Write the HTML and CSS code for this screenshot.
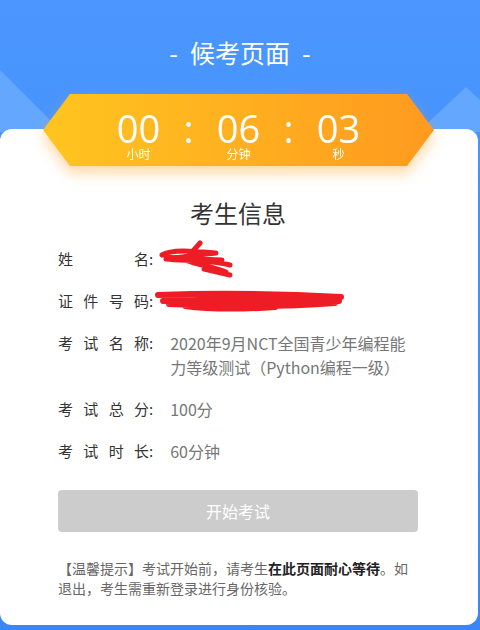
FILE: index.html
```html
<!DOCTYPE html>
<html lang="zh-CN">
<head>
    <meta charset="UTF-8">
    <meta name="viewport" content="width=device-width, initial-scale=1.0">
    <title>候考页面</title>
    <link rel="stylesheet" href="styles.css">
</head>
<body>
    <div class="page">
        <svg class="hills" width="480" height="140" viewBox="0 0 480 140">
            <polygon points="0,70 62,132 0,132" fill="#64a7ff"/>
            <polygon points="418,132 466,87 480,100 480,132" fill="#64a7ff"/>
        </svg>
        <header class="top">
            <h1 class="top-title"><span class="dash">-</span>候考页面<span class="dash">-</span></h1>
        </header>
        <main class="card">
            <div class="timer-wrap">
                <div class="timer">
                    <div class="unit"><span class="num">00</span><span class="lbl">小时</span></div>
                    <span class="colon">:</span>
                    <div class="unit"><span class="num">06</span><span class="lbl">分钟</span></div>
                    <span class="colon">:</span>
                    <div class="unit"><span class="num">03</span><span class="lbl">秒</span></div>
                </div>
            </div>
            <h2 class="card-title">考生信息</h2>
            <ul class="info">
                <li class="row">
                    <span class="label">姓名</span><span class="mark">:</span>
                    <span class="value">
                        <svg class="scribble" width="80" height="40" viewBox="0 0 80 40">
                            <path d="M4,16 C14,10 34,12 58,14 C40,16 20,18 8,20 C26,22 50,20 72,26 M8,18 C30,20 44,20 64,21 M28,20 L42,4 M30,22 C40,26 56,28 68,33 M46,30 L72,36" fill="none" stroke="#ee1c25" stroke-width="5" stroke-linecap="round" stroke-linejoin="round"/>
                        </svg>
                    </span>
                </li>
                <li class="row">
                    <span class="label">证件号码</span><span class="mark">:</span>
                    <span class="value">
                        <svg class="scribble" width="190" height="24" viewBox="0 0 190 24">
                            <path d="M3,6 C60,4 130,5 186,8 C130,10 60,10 8,12 C60,14 130,14 184,12 M14,15 C80,18 140,17 180,14 M30,17 C60,21 90,20 120,18" fill="none" stroke="#ee1c25" stroke-width="6" stroke-linecap="round" stroke-linejoin="round"/>
                        </svg>
                    </span>
                </li>
                <li class="row">
                    <span class="label">考试名称</span><span class="mark">:</span>
                    <span class="value">2020年9月NCT全国青少年编程能力等级测试（Python编程一级）</span>
                </li>
                <li class="row">
                    <span class="label">考试总分</span><span class="mark">:</span>
                    <span class="value">100分</span>
                </li>
                <li class="row">
                    <span class="label">考试时长</span><span class="mark">:</span>
                    <span class="value">60分钟</span>
                </li>
            </ul>
            <button class="start-btn" disabled>开始考试</button>
            <p class="tip">【温馨提示】考试开始前，请考生<b>在此页面耐心等待</b>。如退出，考生需重新登录进行身份核验。</p>
        </main>
    </div>
</body>
</html>
```

FILE: styles.css
```css
*{
  box-sizing:border-box;
}
body{
  margin:0;
  font-family:"Noto Sans CJK SC", sans-serif;
  background:linear-gradient(#4b97ff, #3b86f7);
}
.page{
  position:relative;
  width:480px;
  height:630px;
  overflow:hidden;
}
.hills{
  position:absolute;
  top:0;
  left:0;
}
.top{
  position:relative;
  height:129px;
}
.top-title{
  margin:0;
  padding-top:36px;
  text-align:center;
  color:white;
  font-size:25px;
  font-weight:normal;
  line-height:32px;
}
.dash{
  margin:0 12px;
}
.card{
  position:relative;
  height:496px;
  margin-right:2px;
  padding:0 60px 0 58px;
  background-color:white;
  border-radius:12px;
}
.timer-wrap{
  width:391px;
  margin-left:-15px;
  position:relative;
  top:-35px;
  margin-bottom:-35px;
  filter:drop-shadow(0 7px 7px rgba(255,168,50,0.45));
}
.timer{
  height:72px;
  padding-top:13px;
  display:grid;
  grid-template-columns:60px 40px 60px 40px 60px;
  justify-content:center;
  color:white;
  background:linear-gradient(to right, #ffc51f, #ff9a1f);
  clip-path:polygon(27px 0, calc(100% - 27px) 0, 100% 50%, calc(100% - 27px) 100%, 27px 100%, 0 50%);
}
.unit{
  display:flex;
  flex-direction:column;
  align-items:center;
}
.num{
  font-family:"Open Sans", sans-serif;
  font-size:38px;
  line-height:42px;
}
.lbl{
  font-size:12px;
  line-height:14px;
  margin-top:-2px;
}
.colon{
  text-align:center;
  font-family:"Open Sans", sans-serif;
  font-size:38px;
  line-height:42px;
}
.card-title{
  margin:30px 0 0;
  text-align:center;
  font-size:24px;
  font-weight:normal;
  line-height:34px;
  color:#333;
}
.info{
  list-style:none;
  margin:17px 0 0;
  padding:0;
  display:flex;
  flex-direction:column;
  gap:18px;
}
.row{
  display:flex;
  align-items:flex-start;
  line-height:24px;
}
.label{
  width:91px;
  font-size:15px;
  color:#333;
  text-align:justify;
  text-align-last:justify;
}
.mark{
  font-size:15px;
  color:#333;
}
.value{
  flex:1;
  margin-left:17px;
  font-size:16px;
  color:#777;
}
.scribble{
  display:block;
  margin-left:-12px;
}
.row:first-child .scribble{
  margin-top:-8px;
  margin-bottom:-8px;
}
.row:nth-child(2) .scribble{
  margin-left:-15px;
}
.start-btn{
  display:block;
  width:100%;
  height:42px;
  margin-top:27px;
  border:none;
  border-radius:4px;
  background-color:#ccc;
  color:white;
  font-family:inherit;
  font-size:16px;
}
.tip{
  max-width:356px;
  margin:26px 0 0;
  font-size:14px;
  line-height:20px;
  color:#666;
}
.tip b{
  color:#222;
}
```
